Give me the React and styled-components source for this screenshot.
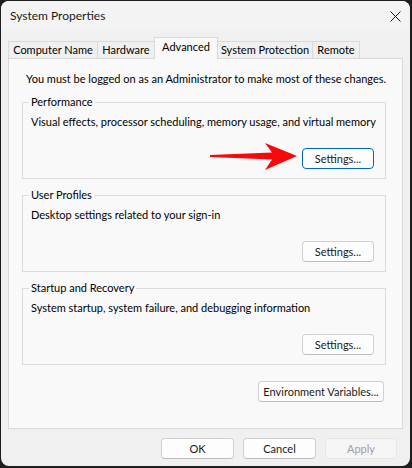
import React from "react";
import styled, { createGlobalStyle } from "styled-components";

const GlobalStyle = createGlobalStyle`
  html, body {
    margin: 0;
    padding: 0;
    background: #1e1e1e;
  }
  body {
    font-family: "Segoe UI", Lato, "Liberation Sans", Arial, sans-serif;
    font-size: 11px;
    color: #000;
  }
  * {
    box-sizing: border-box;
  }
`;

const Page = styled.div`
  width: 412px;
  height: 468px;
  padding: 1px 0 0 1px;
  background: #1e1e1e;
`;

const Window = styled.div`
  width: 409px;
  height: 465px;
  border-radius: 8px;
  background: #f0f0f0;
  overflow: hidden;
  display: flex;
  flex-direction: column;
`;

const TitleBar = styled.div`
  height: 30px;
  flex: none;
  display: flex;
  align-items: center;
  justify-content: space-between;
  padding: 0 9px 0 9px;
  background: #f3f3f3;
`;

const Title = styled.span`
  font-size: 12px;
  line-height: 16px;
  color: #1a1a1a;
`;

const Body = styled.div`
  flex: 1;
  display: flex;
  flex-direction: column;
  padding: 7px 7px 0 7px;
`;

const TabStrip = styled.div`
  display: flex;
  align-items: flex-end;
  height: 21px;
  margin-bottom: -1px;
  position: relative;
  z-index: 1;
`;

const Tab = styled.div`
  width: ${({ $w }) => $w}px;
  height: ${({ $active }) => ($active ? 22 : 18)}px;
  display: flex;
  align-items: center;
  justify-content: center;
  padding-bottom: ${({ $active }) => ($active ? 3 : 0)}px;
  background: ${({ $active }) => ($active ? "#f9f9f9" : "#f0f0f0")};
  border: 1px solid #d9d9d9;
  border-bottom: ${({ $active }) => ($active ? "none" : "1px solid #d9d9d9")};
  margin-left: -1px;
  line-height: 16px;
  white-space: nowrap;
  &:first-child {
    margin-left: 0;
  }
`;

const Panel = styled.div`
  width: 395px;
  height: 371px;
  background: #f9f9f9;
  border: 1px solid #d9d9d9;
  padding: 12px 16px 0 13px;
  display: flex;
  flex-direction: column;
`;

const Notice = styled.div`
  line-height: 16px;
  margin-left: 4px;
  white-space: nowrap;
`;

const GroupBox = styled.fieldset`
  margin: ${({ $gap }) => $gap}px 0 0 0;
  padding: 0 11px 9px 8px;
  border: 1px solid #dcdcdc;
  border-radius: 0;
  min-width: 0;
`;

const Legend = styled.legend`
  padding: 0 2px;
  margin-left: -2px;
  line-height: 16px;
`;

const Description = styled.div`
  line-height: 16px;
  margin-top: 4px;
  white-space: nowrap;
`;

const ButtonRow = styled.div`
  position: relative;
  display: flex;
  justify-content: flex-end;
  margin-top: 18px;
`;

const Button = styled.button`
  width: ${({ $w }) => $w}px;
  height: 21px;
  padding: 0;
  font: inherit;
  line-height: 16px;
  color: ${({ $disabled }) => ($disabled ? "#a0a0a0" : "#1a1a1a")};
  background: ${({ $disabled }) => ($disabled ? "#f5f5f5" : "#fdfdfd")};
  border: 1px solid
    ${({ $focused, $disabled }) =>
      $focused ? "#0067c0" : $disabled ? "#e6e6e6" : "#d0d0d0"};
  border-bottom-color: ${({ $focused, $disabled }) =>
    $focused ? "#0067c0" : $disabled ? "#e6e6e6" : "#bdbdbd"};
  border-radius: 4px;
  white-space: nowrap;
`;

const EnvRow = styled.div`
  display: flex;
  justify-content: flex-end;
  margin-top: 16px;
  padding-right: 2px;
`;

const Footer = styled.div`
  display: flex;
  justify-content: flex-end;
  gap: 9px;
  margin-top: 9px;
  padding-right: 6px;
`;

const Arrow = styled.svg`
  position: absolute;
  right: 76px;
  top: -6px;
`;

const CloseIcon = () => (
  <svg width="11" height="11" viewBox="0 0 11 11">
    <path d="M0.5 0.5 L10.5 10.5 M10.5 0.5 L0.5 10.5" stroke="#1a1a1a" strokeWidth="1" fill="none" />
  </svg>
);

const tabs = [
  { label: "Computer Name", w: 90 },
  { label: "Hardware", w: 58 },
  { label: "Advanced", w: 64, active: true },
  { label: "System Protection", w: 96 },
  { label: "Remote", w: 48 },
];

const groups = [
  {
    title: "Performance",
    text: "Visual effects, processor scheduling, memory usage, and virtual memory",
    focused: true,
  },
  { title: "User Profiles", text: "Desktop settings related to your sign-in" },
  { title: "Startup and Recovery", text: "System startup, system failure, and debugging information" },
];

export default function App() {
  return (
    <Page>
      <GlobalStyle />
      <Window>
        <TitleBar>
          <Title>System Properties</Title>
          <CloseIcon />
        </TitleBar>
        <Body>
          <TabStrip>
            {tabs.map((t) => (
              <Tab key={t.label} $w={t.w} $active={t.active}>
                {t.label}
              </Tab>
            ))}
          </TabStrip>
          <Panel>
            <Notice>You must be logged on as an Administrator to make most of these changes.</Notice>
            {groups.map((g, i) => (
              <GroupBox key={g.title} $gap={i === 0 ? 7 : 8}>
                <Legend>{g.title}</Legend>
                <Description>{g.text}</Description>
                <ButtonRow>
                  {g.focused && (
                    <Arrow width="88" height="30" viewBox="0 0 88 30">
                      <path
                        d="M0 13 L62 10.5 L55 1 L87 14 L55 28 L62 17.5 L0 15 Z"
                        fill="#f5090b"
                      />
                    </Arrow>
                  )}
                  <Button $w={72} $focused={g.focused}>Settings...</Button>
                </ButtonRow>
              </GroupBox>
            ))}
            <EnvRow>
              <Button $w={126}>Environment Variables...</Button>
            </EnvRow>
          </Panel>
          <Footer>
            <Button $w={73}>OK</Button>
            <Button $w={73}>Cancel</Button>
            <Button $w={72} $disabled>Apply</Button>
          </Footer>
        </Body>
      </Window>
    </Page>
  );
}
